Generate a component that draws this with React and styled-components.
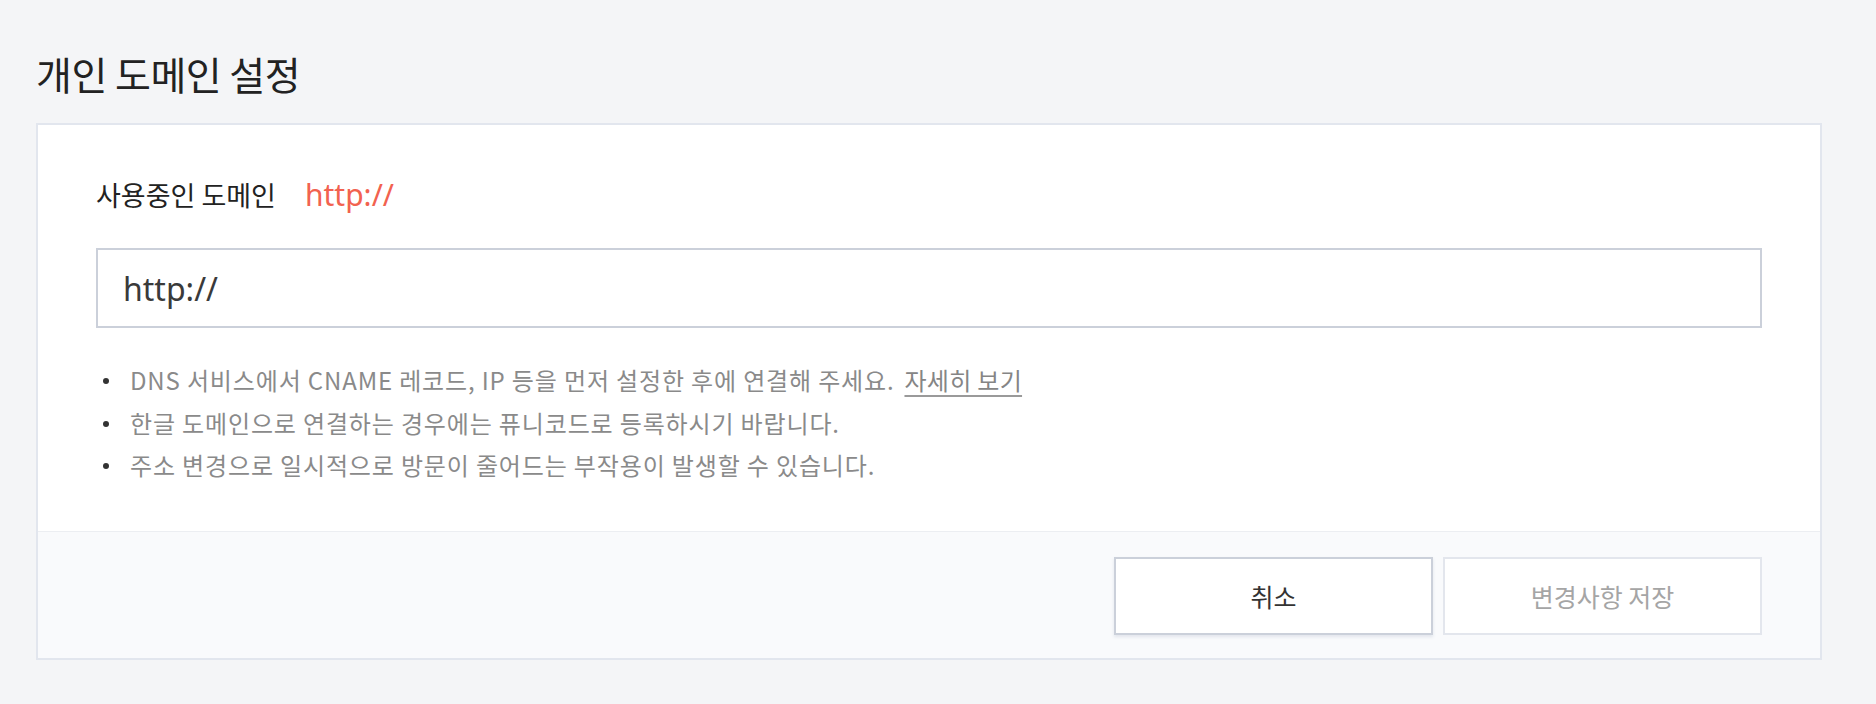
import React from 'react'
import styled, { createGlobalStyle } from 'styled-components'

const GlobalStyle = createGlobalStyle`
  html, body {
    margin: 0;
    padding: 0;
    background: #f4f5f7;
  }
  body {
    font-family: "Noto Sans CJK KR", "Noto Sans", sans-serif;
    color: #222;
  }
  * { box-sizing: border-box; }
`

const notes = [
  { text: 'DNS 서비스에서 CNAME 레코드, IP 등을 먼저 설정한 후에 연결해 주세요.', link: '자세히 보기' },
  { text: '한글 도메인으로 연결하는 경우에는 퓨니코드로 등록하시기 바랍니다.' },
  { text: '주소 변경으로 일시적으로 방문이 줄어드는 부작용이 발생할 수 있습니다.' },
]

const Page = styled.div`
  padding: 50px 54px 44px 36px;
`

const Title = styled.h1`
  margin: 0 0 27px;
  font-size: 39px;
  line-height: 46px;
  font-weight: 400;
  color: #222;
  letter-spacing: -0.5px;
`

const Card = styled.section`
  background: #fff;
  border: 2px solid #e2e6ee;
`

const Body = styled.div`
  padding: 50px 58px 44px;
`

const LabelRow = styled.div`
  display: flex;
  align-items: center;
  gap: 29px;
  height: 40px;
`

const Label = styled.span`
  font-size: 27px;
  line-height: 40px;
  color: #222;
`

const Current = styled.span`
  font-family: "Noto Sans", "Noto Sans CJK KR", sans-serif;
  font-size: 30px;
  line-height: 40px;
  color: #f2624f;
`

const Input = styled.input`
  display: block;
  width: 100%;
  height: 80px;
  margin-top: 33px;
  padding: 0 25px;
  border: 2px solid #cbd0da;
  border-radius: 0;
  background: #fff;
  font-family: "Noto Sans", "Noto Sans CJK KR", sans-serif;
  font-size: 32px;
  color: #3a3a3a;
  outline: none;
`

const Notes = styled.ul`
  list-style: none;
  margin: 31px 0 0;
  padding: 0;
`

const Note = styled.li`
  position: relative;
  padding-left: 34px;
  font-size: 24px;
  line-height: 42.5px;
  letter-spacing: 0.85px;
  color: #8a8a8a;

  &::before {
    content: '';
    position: absolute;
    left: 7px;
    top: 19px;
    width: 6px;
    height: 6px;
    border-radius: 50%;
    background: #333;
  }
`

const More = styled.a`
  margin-left: 10px;
  color: #858585;
  letter-spacing: 0.3px;
  text-decoration: underline;
  text-decoration-color: #9a9a9a;
  text-underline-offset: 5px;
`

const Footer = styled.div`
  display: flex;
  justify-content: flex-end;
  gap: 10px;
  padding: 25px 58px 23px;
  border-top: 1px solid #eceef2;
  background: #f9fafc;
`

const Button = styled.button`
  width: 319px;
  height: 78px;
  background: #fff;
  border: 2px solid ${p => (p.disabled ? '#e3e6ed' : '#cbd0da')};
  box-shadow: ${p => (p.disabled ? 'none' : '0 2px 3px rgba(160, 170, 190, 0.25)')};
  font-family: "Noto Sans CJK KR", "Noto Sans", sans-serif;
  font-size: 25px;
  color: ${p => (p.disabled ? '#a5a5a5' : '#333')};
  cursor: ${p => (p.disabled ? 'default' : 'pointer')};
`

export default function App() {
  return (
    <>
      <GlobalStyle />
      <Page>
        <Title>개인 도메인 설정</Title>
        <Card>
          <Body>
            <LabelRow>
              <Label>사용중인 도메인</Label>
              <Current>http://</Current>
            </LabelRow>
            <Input defaultValue="http://" />
            <Notes>
              {notes.map((n, i) => (
                <Note key={i}>
                  {n.text}
                  {n.link && <More href="#">{n.link}</More>}
                </Note>
              ))}
            </Notes>
          </Body>
          <Footer>
            <Button>취소</Button>
            <Button disabled>변경사항 저장</Button>
          </Footer>
        </Card>
      </Page>
    </>
  )
}
